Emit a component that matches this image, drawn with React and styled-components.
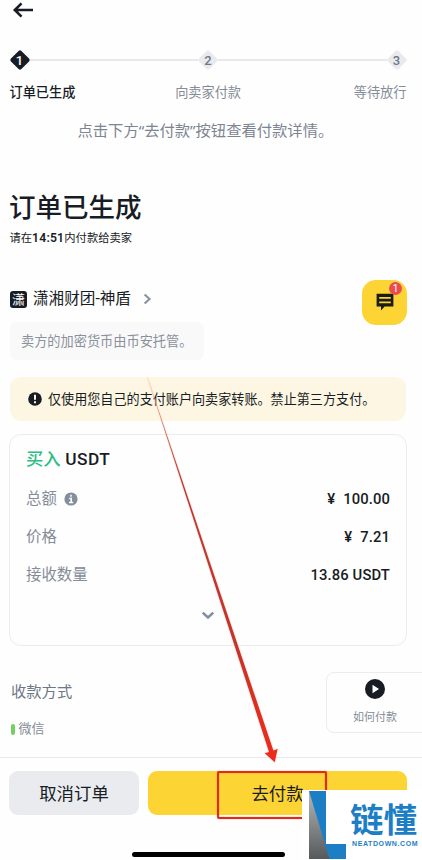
import { Fragment } from 'react';
import styled, { createGlobalStyle } from 'styled-components';

const steps = [
  { label: '订单已生成', active: true },
  { label: '向卖家付款' },
  { label: '等待放行' },
];

const rows = [
  { label: '总额', amount: '100.00', currency: '¥', info: true },
  { label: '价格', amount: '7.21', currency: '¥' },
  { label: '接收数量', amount: '13.86 USDT' },
];

function App() {
  return (
    <>
      <GlobalStyle />
      <Screen>
        <Header>
          <svg width="22" height="16" viewBox="0 0 22 16" fill="none" stroke="#181c24" strokeWidth="2.6">
            <path d="M21 8H3M9.5 1.3L2.8 8l6.7 6.7" />
          </svg>
        </Header>

        <Track>
          {steps.map((step, i) => (
            <Fragment key={step.label}>
              {i > 0 && <Line />}
              <Diamond $active={step.active}>
                <svg width="22" height="22" viewBox="0 0 22 22">
                  <rect x="3.6" y="3.6" width="14.8" height="14.8" rx="2" transform="rotate(45 11 11)" />
                </svg>
                <span>{i + 1}</span>
              </Diamond>
            </Fragment>
          ))}
        </Track>
        <StepLabels>
          {steps.map((step) => (
            <StepLabel key={step.label} $active={step.active}>{step.label}</StepLabel>
          ))}
        </StepLabels>
        <Hint>点击下方“去付款”按钮查看付款详情。</Hint>

        <Title>订单已生成</Title>
        <Deadline>请在<b>14:51</b>内付款给卖家</Deadline>

        <SellerRow>
          <div>
            <Seller>
              <Avatar>潇</Avatar>
              <SellerName>潇湘财团-神盾</SellerName>
              <svg width="9" height="12" viewBox="0 0 9 12" fill="none" stroke="#8b929c" strokeWidth="2.1">
                <path d="M1.6 1.4L6.6 6l-5 4.6" />
              </svg>
            </Seller>
            <Escrow>卖方的加密货币由币安托管。</Escrow>
          </div>
          <ChatButton>
            <svg width="18" height="18" viewBox="0 0 18 18">
              <path d="M0.6 0.8h16.8v12.8H8.6L5 17.4v-3.8H0.6z" fill="#1c1d12" />
              <path d="M3.2 4.9h11.6M3.2 9.3h11.6" stroke="#fcd535" strokeWidth="1.7" />
            </svg>
            <Count>1</Count>
          </ChatButton>
        </SellerRow>

        <Notice>
          <svg width="14" height="14" viewBox="0 0 14 14">
            <circle cx="7" cy="7" r="6.8" fill="#181c24" />
            <path d="M7 2.8v5M7 9.2v2" stroke="#fdf6e3" strokeWidth="2" />
          </svg>
          <span>仅使用您自己的支付账户向卖家转账。禁止第三方支付。</span>
        </Notice>

        <Card>
          <CardTitle><em>买入</em> USDT</CardTitle>
          {rows.map((row) => (
            <Row key={row.label}>
              <RowLabel>
                <span>{row.label}</span>
                {row.info && (
                  <svg width="14" height="14" viewBox="0 0 14 14">
                    <circle cx="7" cy="7" r="6.6" fill="#848e9c" />
                    <path d="M7 2.8v2M5.3 6.4H7.2V10.2M5 10.4h4.2" stroke="#fff" strokeWidth="1.5" fill="none" />
                  </svg>
                )}
              </RowLabel>
              <Value>
                {row.currency && <Currency>{row.currency}</Currency>}
                {row.amount}
              </Value>
            </Row>
          ))}
          <More>
            <svg width="14" height="9" viewBox="0 0 14 9" fill="none" stroke="#848e9c" strokeWidth="2.5">
              <path d="M1.7 1.6L7 6.5l5.3-4.9" />
            </svg>
          </More>
        </Card>

        <Payment>
          <div>
            <PaymentTitle>收款方式</PaymentTitle>
            <Method>微信</Method>
          </div>
          <HowTo>
            <svg width="20" height="20" viewBox="0 0 20 20">
              <circle cx="10" cy="10" r="10" fill="#181c24" />
              <path d="M7.5 5.8L14 10l-6.5 4.2z" fill="#fff" />
            </svg>
            如何付款
          </HowTo>
        </Payment>

        <Footer>
          <Button>取消订单</Button>
          <Button $primary>去付款</Button>
        </Footer>
        <HomeBar />

        <Highlight />
        <Pointer width="422" height="860" viewBox="0 0 422 860">
          <defs>
            <linearGradient id="shaft" x1="0" y1="378" x2="0" y2="763" gradientUnits="userSpaceOnUse">
              <stop offset="0" stopColor="#c98a72" />
              <stop offset="0.25" stopColor="#b93a32" />
              <stop offset="0.7" stopColor="#c63329" />
              <stop offset="1" stopColor="#ef2b1c" />
            </linearGradient>
          </defs>
          <path
            d="M147.3 377L273.4 750.4L277.6 749L274.7 762.2L264.8 753.2L269 751.9z"
            fill="url(#shaft)"
            stroke="#ffb9a8"
            strokeOpacity="0.35"
            strokeWidth="1.6"
            paintOrder="stroke"
          />
        </Pointer>

        <Watermark>
          <svg width="38" height="68" viewBox="0 0 38 68">
            <defs>
              <linearGradient id="steel" x1="0" y1="0" x2="0" y2="1">
                <stop offset="0" stopColor="#b5b7b8" />
                <stop offset="1" stopColor="#56595b" />
              </linearGradient>
            </defs>
            <path d="M0 0h17v53h20v15H0z" fill="#1c7fc6" />
            <path d="M0 0L20.5 68H0z" fill="url(#steel)" />
          </svg>
          <Brand>
            <strong>链懂</strong>
            <small>NEATDOWN.COM</small>
          </Brand>
        </Watermark>
      </Screen>
    </>
  );
}

const GlobalStyle = createGlobalStyle`
  * {
    box-sizing: border-box;
  }
  body {
    margin: 0;
    background: #fefefe;
  }
  svg {
    display: block;
    flex: none;
  }
`;

const Screen = styled.div`
  position: relative;
  width: 422px;
  height: 860px;
  overflow: hidden;
  display: flex;
  flex-direction: column;
  background: #fefefe;
  color: #181c24;
  font-family: Roboto, "Noto Sans CJK SC", sans-serif;
  white-space: nowrap;
`;

const Header = styled.header`
  height: 49px;
  padding: 2px 0 0 12px;
`;

const Track = styled.div`
  display: flex;
  align-items: center;
  height: 22px;
  padding: 0 14.5px 0 8.5px;
`;

const Line = styled.div`
  flex: 1;
  height: 2px;
  margin: 0 -1px;
  background: #e8e9ec;
`;

const Diamond = styled.div`
  display: grid;
  place-items: center;
  font-size: 13px;
  font-weight: 500;
  line-height: 22px;
  color: ${(p) => (p.$active ? '#fff' : '#6f7785')};
  svg, span {
    grid-area: 1 / 1;
  }
  span {
    padding-top: 1px;
  }
  rect {
    fill: ${(p) => (p.$active ? '#181c24' : '#e9eaee')};
  }
`;

const StepLabels = styled.div`
  display: flex;
  justify-content: space-between;
  margin-top: 12px;
  padding: 0 15.5px 0 9.5px;
`;

const StepLabel = styled.span`
  font-size: 13.2px;
  line-height: 20px;
  font-weight: ${(p) => (p.$active ? 500 : 400)};
  color: ${(p) => (p.$active ? '#181c24' : '#858c98')};
  &:nth-child(2) {
    margin-right: 13px;
  }
`;

const Hint = styled.p`
  margin: 15px 0 0 77.5px;
  font-family: "Noto Sans", "Noto Sans CJK SC", sans-serif;
  font-size: 15.3px;
  line-height: 24px;
  color: #7d8592;
`;

const Title = styled.h1`
  margin: 47px 0 0 9px;
  font-size: 26.5px;
  font-weight: 500;
  line-height: 38px;
`;

const Deadline = styled.p`
  margin: 2px 0 0 9.5px;
  font-size: 11.3px;
  line-height: 18px;
  b {
    font-size: 12.2px;
    font-weight: 600;
    letter-spacing: 0.2px;
  }
`;

const SellerRow = styled.section`
  display: flex;
  justify-content: space-between;
  margin-top: 32px;
  padding: 0 15px 0 10px;
`;

const Seller = styled.div`
  display: flex;
  align-items: center;
  height: 24px;
  margin-top: 7px;
`;

const Avatar = styled.span`
  width: 17px;
  height: 17px;
  margin-right: 6px;
  border-radius: 3px;
  background: #181c24;
  color: #fff;
  font-size: 13px;
  line-height: 17px;
  text-align: center;
`;

const SellerName = styled.span`
  margin-right: 12px;
  font-size: 15.6px;
  line-height: 24px;
`;

const Escrow = styled.p`
  width: 194px;
  height: 38px;
  margin: 11px 0 0;
  padding-left: 11px;
  border-radius: 7px;
  background: #f9f9fa;
  color: #8a919b;
  font-size: 13.2px;
  line-height: 39px;
`;

const ChatButton = styled.div`
  position: relative;
  display: grid;
  place-items: center;
  width: 45px;
  height: 45px;
  margin-top: -0.5px;
  border-radius: 14px;
  background: #fcd535;
`;

const Count = styled.span`
  position: absolute;
  top: 2px;
  right: 5px;
  width: 13px;
  height: 13px;
  border-radius: 50%;
  background: #ea4b4f;
  color: #fff;
  font-size: 10px;
  line-height: 14px;
  text-align: center;
`;

const Notice = styled.div`
  display: flex;
  align-items: center;
  gap: 6px;
  height: 44px;
  margin: 17px 16px 0 10px;
  padding-left: 18px;
  border-radius: 11px;
  background: #fdf6e3;
  font-size: 13.1px;
  line-height: 20px;
  span {
    padding-top: 1px;
  }
`;

const Card = styled.section`
  height: 212px;
  margin: 13px 15px 0 9px;
  padding: 11px 16px 0;
  border: 1px solid #ebecee;
  border-radius: 12px;
`;

const CardTitle = styled.h2`
  margin: 0 0 8px;
  padding-top: 1px;
  font-size: 17.3px;
  font-weight: 500;
  line-height: 25px;
  letter-spacing: 0.45px;
  em {
    font-style: normal;
    letter-spacing: 0;
    color: #2ebd85;
  }
`;

const Row = styled.div`
  display: flex;
  justify-content: space-between;
  align-items: center;
  height: 38px;
`;

const RowLabel = styled.span`
  display: flex;
  align-items: center;
  gap: 7px;
  color: #858c98;
  font-size: 15.4px;
  line-height: 24px;
`;

const Value = styled.span`
  font-size: 14.8px;
  font-weight: 500;
  letter-spacing: 0.1px;
`;

const Currency = styled.span`
  margin-right: 8px;
`;

const More = styled.div`
  display: flex;
  justify-content: center;
  margin-top: 17px;
`;

const Payment = styled.section`
  display: flex;
  justify-content: space-between;
  height: 111px;
  padding: 26px 0 0 11px;
`;

const PaymentTitle = styled.h3`
  margin: 8px 0 13px;
  font-size: 15.3px;
  font-weight: 400;
  line-height: 25px;
  color: #6f7886;
`;

const Method = styled.div`
  display: flex;
  align-items: center;
  gap: 4px;
  font-size: 13px;
  line-height: 22px;
  color: #858c98;
  &::before {
    content: '';
    width: 3.5px;
    height: 11px;
    border-radius: 2px;
    background: #74cf60;
  }
`;

const HowTo = styled.div`
  display: flex;
  flex-direction: column;
  align-items: center;
  gap: 10px;
  width: 98px;
  height: 61px;
  margin-right: -2px;
  padding-top: 6px;
  border: 1px solid #ebecee;
  border-radius: 8px 0 0 8px;
  color: #858c98;
  font-size: 11px;
  line-height: 18px;
`;

const Footer = styled.footer`
  display: flex;
  gap: 9px;
  height: 95px;
  padding: 13px 15px 0 9px;
  border-top: 1px solid #e8e9eb;
`;

const Button = styled.button`
  flex: ${(p) => (p.$primary ? 1 : '0 0 130px')};
  height: 44px;
  padding: 1px 0 0;
  border: 0;
  border-radius: 9px;
  background: ${(p) => (p.$primary ? '#fcd535' : '#eaebee')};
  color: #181c24;
  font-family: inherit;
  font-size: 17.4px;
  line-height: 44px;
`;

const HomeBar = styled.div`
  flex: none;
  width: 153px;
  height: 5px;
  margin-left: 132px;
  border-radius: 3px;
  background: #000;
`;

const Highlight = styled.div`
  position: absolute;
  left: 217px;
  top: 771px;
  width: 110px;
  height: 48px;
  border: 2px solid #e02b17;
  border-radius: 2px;
  box-shadow: 0 0 1px #e0401c, inset 0 0 1px #e0401c;
`;

const Pointer = styled.svg`
  position: absolute;
  left: 0;
  top: 0;
`;

const Watermark = styled.div`
  position: absolute;
  right: 0;
  bottom: 0;
  display: flex;
  gap: 4px;
  width: 120px;
  height: 70px;
  padding: 1px 0 0 7px;
  background: #fff;
`;

const Brand = styled.div`
  display: flex;
  flex-direction: column;
  color: #1c7fc6;
  strong {
    margin-top: 5px;
    margin-left: -1px;
    font-size: 33.5px;
    font-weight: 700;
    line-height: 50px;
    height: 44px;
  }
  small {
    margin-left: 1px;
    font-family: "Liberation Sans", sans-serif;
    font-size: 7px;
    font-weight: 700;
    letter-spacing: 0.6px;
    line-height: 8px;
  }
`;

export default App;
